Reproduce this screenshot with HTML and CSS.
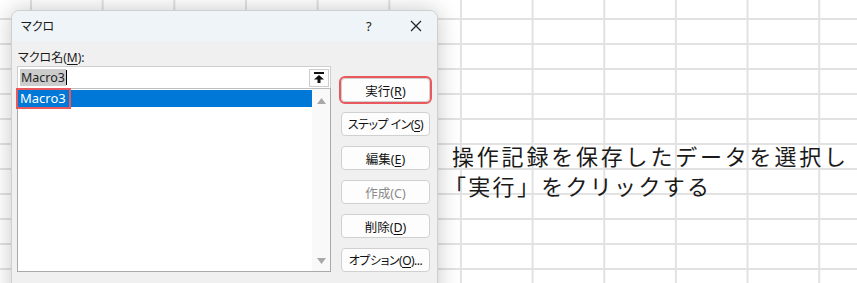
FILE: index.html
```html
<!DOCTYPE html>
<html lang="ja">
<head>
    <meta charset="UTF-8">
    <title>マクロ</title>
    <link rel="stylesheet" href="styles.css">
</head>
<body>
    <div class="sheet">
        <div class="dialog">
            <div class="titlebar">
                <span class="title">マクロ</span>
                <span class="help">?</span>
                <span class="close">
                    <svg width="12" height="12" viewBox="0 0 12 12"><path d="M1 1 L11 11 M11 1 L1 11" stroke="#222" stroke-width="1.2" fill="none"/></svg>
                </span>
            </div>
            <div class="dialog-body">
                <div class="left-col">
                    <div class="label">マクロ名(<u>M</u>):</div>
                    <div class="name-input">
                        <span class="name-text">Macro3</span><span class="caret"></span>
                        <span class="up-btn">
                            <svg width="10" height="11" viewBox="0 0 10 11"><rect x="0" y="0" width="10" height="2" fill="#111"/><path d="M5 3 L10 7.5 L6.5 7.5 L6.5 11 L3.5 11 L3.5 7.5 L0 7.5 Z" fill="#111"/></svg>
                        </span>
                    </div>
                    <div class="macro-list">
                        <div class="list-items">
                            <div class="list-item selected"><span class="mark">Macro3</span></div>
                        </div>
                        <div class="scrollbar">
                            <svg width="9" height="6" viewBox="0 0 9 6"><path d="M4.5 0 L9 6 L0 6 Z" fill="#a8a8a8"/></svg>
                            <svg width="9" height="6" viewBox="0 0 9 6"><path d="M0 0 L9 0 L4.5 6 Z" fill="#a8a8a8"/></svg>
                        </div>
                    </div>
                </div>
                <div class="buttons">
                    <button class="btn run">実行(<u>R</u>)</button>
                    <button class="btn tight">ステップ イン(<u>S</u>)</button>
                    <button class="btn">編集(<u>E</u>)</button>
                    <button class="btn disabled">作成(C)</button>
                    <button class="btn">削除(<u>D</u>)</button>
                    <button class="btn tight">オプション(<u>O</u>)...</button>
                </div>
            </div>
        </div>
        <div class="note">
            <div class="line1">操作記録を保存したデータを選択し</div>
            <div class="line2">「実行」をクリックする</div>
        </div>
    </div>
</body>
</html>
```

FILE: styles.css
```css
body {
    margin: 0;
    padding: 0;
    font-family: 'Noto Sans', 'Noto Sans CJK JP', sans-serif;
    color: #1a1a1a;
}
.sheet {
    position: relative;
    width: 857px;
    height: 283px;
    overflow: hidden;
    background-color: #ffffff;
    background-image:
        linear-gradient(to right, #e2e2e2 2px, transparent 2px),
        linear-gradient(to bottom, #e2e2e2 2px, transparent 2px);
    background-size: 71.67px 25px;
    background-position: 30px 18px;
}
.dialog {
    position: absolute;
    left: 11px;
    top: 10px;
    width: 425px;
    height: 300px;
    background-color: #f0f0f0;
    border: 1px solid #cfcfcf;
    border-radius: 8px;
    box-shadow: 0 0 22px rgba(0, 0, 0, 0.22);
    overflow: hidden;
    font-feature-settings: "palt";
}
.titlebar {
    height: 30px;
    background-color: #eef4f7;
    display: flex;
    align-items: center;
    font-size: 12px;
}
.title {
    margin-left: 9px;
    flex: 1;
}
.help {
    width: 20px;
    font-size: 13px;
    margin-right: 24px;
}
.close {
    display: flex;
    margin-right: 15px;
}
.dialog-body {
    display: flex;
    gap: 10px;
    padding: 9px 0 0 5px;
}
.left-col {
    width: 314px;
}
.label {
    font-size: 12px;
    line-height: 16px;
    margin-left: 1px;
}
.label u, .btn u {
    text-underline-offset: 2px;
}
.name-input {
    height: 21px;
    background-color: #ffffff;
    border: 1px solid #cfcfcf;
    border-bottom: none;
    display: flex;
    align-items: center;
    padding: 0 1px 0 2px;
    font-size: 12.5px;
}
.name-text {
    background-color: #cccccc;
    color: #222;
    padding: 1px 1px;
    line-height: 15px;
}
.caret {
    width: 1px;
    height: 15px;
    background-color: #000;
}
.up-btn {
    margin-left: auto;
    width: 18px;
    height: 16px;
    border: 1px solid #cdcdcd;
    background-color: #fcfcfc;
    display: flex;
    align-items: center;
    justify-content: center;
}
.macro-list {
    height: 182px;
    background-color: #ffffff;
    border: 1px solid #a9a9a9;
    border-top-color: #bdbdbd;
    display: flex;
}
.list-items {
    flex: 1;
    padding-top: 1px;
}
.list-item {
    height: 17px;
    font-size: 13px;
    line-height: 17px;
}
.list-item.selected {
    background-color: #0078d7;
    color: #ffffff;
}
.mark {
    display: inline-block;
    height: 17px;
    padding: 0 3px 0 2px;
    outline: 2px solid #e8585d;
    outline-offset: 0;
}
.scrollbar {
    width: 18px;
    background-color: #f9f9f9;
    display: flex;
    flex-direction: column;
    justify-content: space-between;
    align-items: center;
    padding: 9px 0 7px;
}
.buttons {
    width: 89px;
    display: flex;
    flex-direction: column;
    gap: 10px;
    padding-top: 28px;
}
.btn {
    height: 24px;
    background-color: #fdfdfd;
    border: 1px solid #d0d0d0;
    border-radius: 4px;
    font-family: 'Noto Sans', 'Noto Sans CJK JP', sans-serif;
    font-feature-settings: "palt";
    font-size: 12.5px;
    color: #111111;
    padding: 0;
    white-space: nowrap;
}
.btn.tight {
    font-size: 12px;
    letter-spacing: -0.5px;
}
.btn.run {
    outline: 2px solid #e8585d;
    outline-offset: 0;
}
.btn.disabled {
    color: #8a8a8a;
}
.note {
    position: absolute;
    left: 452px;
    top: 141px;
    font-family: 'Noto Sans CJK JP', sans-serif;
    font-size: 22px;
    letter-spacing: 2.8px;
    color: #1a1a1a;
}
.line1, .line2 {
    height: 30px;
    line-height: 28px;
}
.line2 {
    margin-left: -8px;
    letter-spacing: 2.3px;
}
```
